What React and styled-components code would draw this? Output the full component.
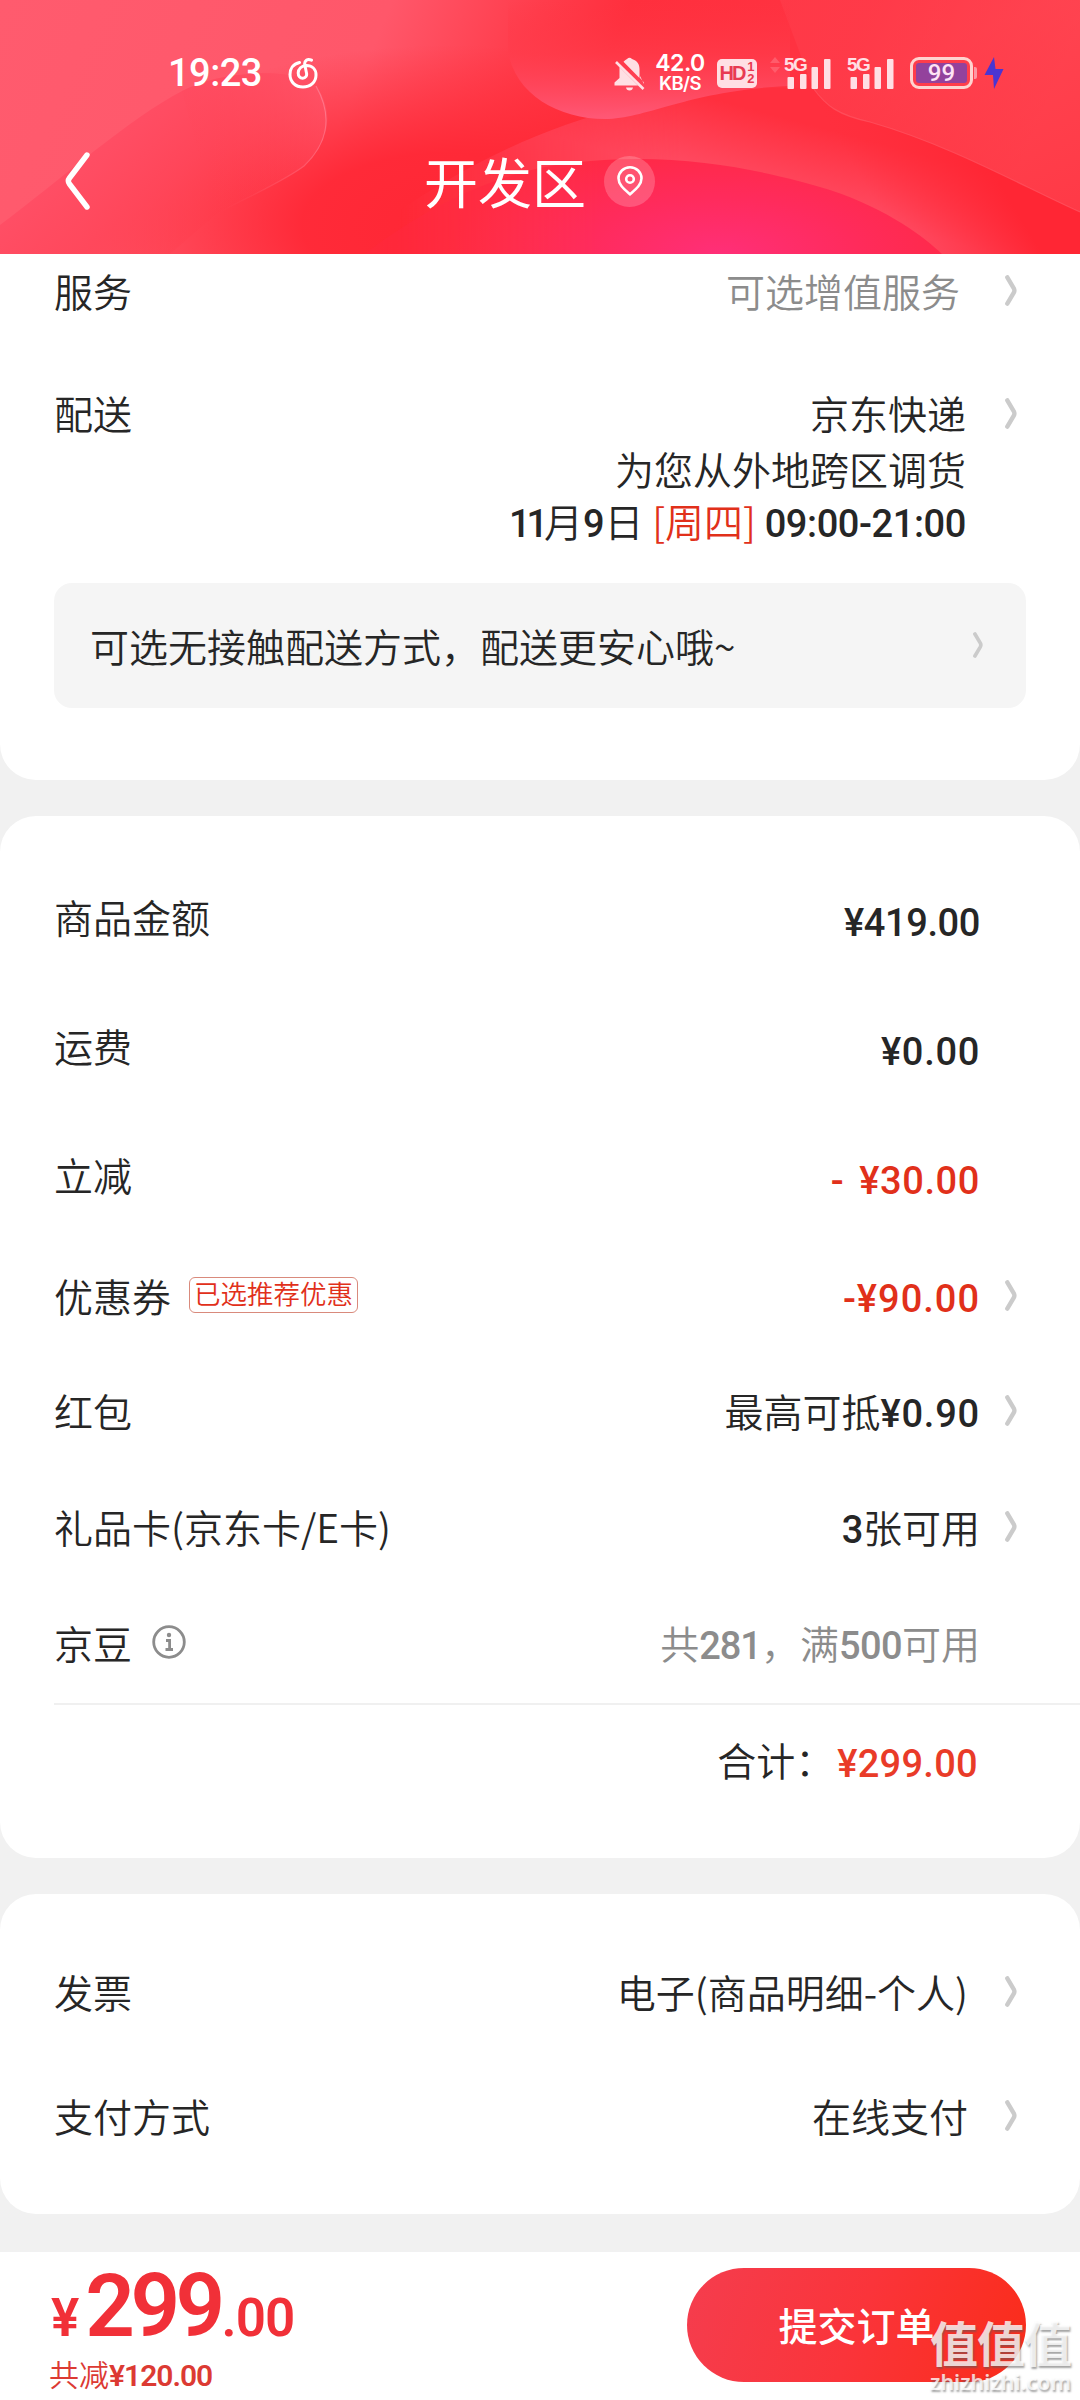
import React from 'react'
import styled, { createGlobalStyle } from 'styled-components'

const feeRows = [
  { id: 1, label: '商品金额', value: <Num $gap={-0.4}>¥419.00</Num>, height: 129, drop: 3 },
  { id: 2, label: '运费', value: <Num $gap={0.7}>¥0.00</Num>, height: 129, drop: 3 },
  { id: 3, label: '立减', value: <Num $gap={0.6}>- ¥30.00</Num>, height: 129, drop: 3, tone: 'red' },
  { id: 4, label: '优惠券', tag: '已选推荐优惠', value: <Num $gap={1}>-¥90.00</Num>, height: 114, tone: 'red', arrow: true },
  { id: 5, label: '红包', value: <>最高可抵<Num $gap={0.8}>¥0.90</Num></>, height: 116, arrow: true },
  { id: 6, label: '礼品卡(京东卡/E卡)', value: <><Num>3</Num>张可用</>, height: 116, arrow: true },
  { id: 7, label: '京豆', info: true, value: <>共<Num $gap={-1}>281</Num>，满<Num $gap={-0.6}>500</Num>可用</>, height: 116, tone: 'grey' },
]

const Arrow = ({ small }) => (
  <ArrowIcon $small={small} viewBox="0 0 12 31">
    <path d="M2.300 2.300 L8.800 13.300 Q10 15.500 8.800 17.700 L2.300 28.700" />
  </ArrowIcon>
)

const Signal = () => (
  <SignalBox>
    <span>5G</span>
    <svg width="44" height="31" viewBox="0 0 44 31" fill="#ffdfe4">
      <rect x="0.5" y="19" width="6.5" height="12" rx="1" />
      <rect x="13" y="16" width="6.5" height="15" rx="1" />
      <rect x="24.5" y="9" width="6.5" height="22" rx="1" />
      <rect x="37" y="1" width="6.5" height="30" rx="1" />
    </svg>
  </SignalBox>
)

const Waves = () => (
  <WavesSvg viewBox="0 0 1080 254" preserveAspectRatio="none">
    <defs>
      <linearGradient id="base" x1="0" y1="0" x2="1" y2="0.1">
        <stop offset="0" stopColor="#ff5b6e" />
        <stop offset="0.36" stopColor="#ff576a" />
        <stop offset="0.5" stopColor="#ff3c4b" />
        <stop offset="0.58" stopColor="#ff2f3d" />
        <stop offset="0.8" stopColor="#ff3342" />
        <stop offset="1" stopColor="#ff4450" />
      </linearGradient>
      <radialGradient id="deep" cx="0" cy="0" r="1" gradientUnits="userSpaceOnUse" gradientTransform="translate(450 225) scale(370 180)">
        <stop offset="0" stopColor="#ff2735" />
        <stop offset="0.4" stopColor="#ff2836" stopOpacity="0.95" />
        <stop offset="1" stopColor="#ff2b38" stopOpacity="0" />
      </radialGradient>
      <linearGradient id="leaf" x1="120" y1="110" x2="230" y2="235" gradientUnits="userSpaceOnUse">
        <stop offset="0" stopColor="#ff4f66" />
        <stop offset="0.5" stopColor="#ff4559" stopOpacity="0.85" />
        <stop offset="1" stopColor="#ff3645" stopOpacity="0" />
      </linearGradient>
      <linearGradient id="leafTip" x1="330" y1="90" x2="200" y2="190" gradientUnits="userSpaceOnUse">
        <stop offset="0" stopColor="#ff5a70" stopOpacity="0.6" />
        <stop offset="1" stopColor="#ff4052" stopOpacity="0" />
      </linearGradient>
      <linearGradient id="leafEdge" x1="326" y1="110" x2="220" y2="215" gradientUnits="userSpaceOnUse">
        <stop offset="0" stopColor="#ff7488" />
        <stop offset="1" stopColor="#ff5060" stopOpacity="0" />
      </linearGradient>
      <linearGradient id="cloud" x1="0" y1="0" x2="0" y2="1">
        <stop offset="0" stopColor="#ff3342" stopOpacity="0" />
        <stop offset="0.45" stopColor="#ff3c4c" stopOpacity="0.6" />
        <stop offset="1" stopColor="#ff5876" />
      </linearGradient>
      <linearGradient id="band" x1="680" y1="90" x2="660" y2="165" gradientUnits="userSpaceOnUse">
        <stop offset="0" stopColor="#ff2f3e" />
        <stop offset="1" stopColor="#ff4c64" />
      </linearGradient>
      <linearGradient id="bandFade" x1="400" y1="0" x2="680" y2="0" gradientUnits="userSpaceOnUse">
        <stop offset="0" stopColor="#fff" stopOpacity="0" />
        <stop offset="1" stopColor="#fff" />
      </linearGradient>
      <mask id="bandMask"><rect width="1080" height="254" fill="url(#bandFade)" /></mask>
      <linearGradient id="right" x1="960" y1="40" x2="1050" y2="254" gradientUnits="userSpaceOnUse">
        <stop offset="0" stopColor="#ff4452" />
        <stop offset="1" stopColor="#ff2634" />
      </linearGradient>
      <linearGradient id="slope" x1="880" y1="210" x2="980" y2="150" gradientUnits="userSpaceOnUse">
        <stop offset="0" stopColor="#ff2c3a" stopOpacity="0" />
        <stop offset="1" stopColor="#ff2634" />
      </linearGradient>
      <radialGradient id="hill" cx="0" cy="0" r="1" gradientUnits="userSpaceOnUse" gradientTransform="translate(720 254) scale(270 113)">
        <stop offset="0" stopColor="#ff2f78" />
        <stop offset="0.5" stopColor="#ff2b5c" />
        <stop offset="1" stopColor="#ff2942" />
      </radialGradient>
      <linearGradient id="hillFade" x1="370" y1="0" x2="600" y2="0" gradientUnits="userSpaceOnUse">
        <stop offset="0" stopColor="#fff" stopOpacity="0.3" />
        <stop offset="1" stopColor="#fff" />
      </linearGradient>
      <mask id="hillMask"><rect width="1080" height="254" fill="url(#hillFade)" /></mask>
    </defs>
    <rect width="1080" height="254" fill="url(#base)" />
    <rect width="1080" height="254" fill="url(#deep)" />
    <path d="M0 254 V225 C60 180 130 118 182 91 C220 70 300 66 318 88 C336 118 326 145 304 166 C280 184 240 200 215 215 L170 254 Z" fill="url(#leaf)" />
    <path d="M182 91 C220 70 300 66 318 88 C336 118 326 145 304 166 C280 184 240 200 215 215 Z" fill="url(#leafTip)" />
    <path d="M316 86 C334 118 326 145 304 166 C280 184 240 200 215 215" fill="none" stroke="url(#leafEdge)" strokeWidth="1.2" />
    <path d="M813 88 C826 106 838 115 870 122 C950 145 1020 185 1080 212 V0 H780 Z" fill="url(#right)" opacity="0.4" />
    <g mask="url(#bandMask)">
      <path d="M400 210 C520 130 640 85 813 88 C826 106 838 115 870 122 C950 145 1020 185 1080 212 V254 H400 Z" fill="url(#band)" />
    </g>
    <path d="M813 88 C826 106 838 115 870 122 C950 145 1020 185 1080 212 V254 H880 Z" fill="url(#slope)" />
    <path d="M508 0 V50 C514 95 560 119 605 119 C650 118 690 90 790 86 V0 Z" fill="url(#cloud)" />
    <path d="M813 88 C826 106 838 115 870 122 C950 145 1020 185 1080 212" fill="none" stroke="#ff5a68" strokeWidth="1.2" opacity="0.6" />
    <g mask="url(#hillMask)">
      <path d="M365 254 C415 215 490 172 570 163 C680 150 770 172 830 190 C890 210 925 238 942 254 Z" fill="url(#hill)" />
    </g>
  </WavesSvg>
)

const App = () => {
  return (
    <Page>
      <GlobalStyle />
      <Header>
        <Waves />
        <StatusBar>
          <Clock>19:23</Clock>
          <MusicIcon viewBox="0 0 30 32">
            <path d="M11.5 5.5 C5 7 2 12 2 17.500 C2 25 7.500 30 15 30 C22.500 30 28 25 28 18 C28 12 24 8.500 18.500 8.500 C13.500 8.500 10.200 12 10.200 16 C10.200 19 12 21.200 14.700 21.200 C17.500 21.200 19.200 19 18.500 16 L16.800 8 C16 3.500 19.500 1.200 23.500 3.200" />
          </MusicIcon>
          <StatusRight>
            <svg width="31" height="35" viewBox="0 0 31 35" fill="#ffdfe4">
              <path d="M13 3 Q15.500 0.500 18 3 C23 4.500 25.500 8 25.500 13 V22 L9.500 5.800 Q11 4 13 3Z" />
              <path d="M5.500 11 L24 29.500 H0.500 V26.500 L5.500 22Z" />
              <path d="M12 31.500 H19 Q18.500 34.500 15.500 34.500 Q12.500 34.500 12 31.500Z" />
              <path d="M26 20 V22 L30 26.500 V28Z" />
              <path d="M2 6 L29.500 33" stroke="#ffdfe4" strokeWidth="2.600" />
            </svg>
            <Speed>
              <b>42.0</b>
              <small>KB/S</small>
            </Speed>
            <HdBadge>
              <b>HD</b>
              <span>
                <i>1</i>
                <i>2</i>
              </span>
            </HdBadge>
            <Updown width="10" height="16" viewBox="0 0 10 16">
              <path d="M5 0 L10 6 H0Z M5 16 L0 10 H10Z" />
            </Updown>
            <Signal />
            <Signal />
            <Battery>
              <div>99</div>
            </Battery>
            <BoltIcon width="20" height="32" viewBox="0 0 20 32">
              <path d="M10 0 L0.500 18 H9 L10 32 L19.500 12 H11.500Z" />
            </BoltIcon>
          </StatusRight>
        </StatusBar>
        <NavBar>
          <BackIcon viewBox="0 0 26 58">
            <path d="M22 3 L4.500 26 Q2.200 29 4.500 32 L22 55" />
          </BackIcon>
          <Title>开发区</Title>
          <PinButton>
            <svg width="26" height="30" viewBox="0 0 26 30" fill="none" stroke="#fff" strokeWidth="2.600">
              <path d="M13 28.300 C7.500 23.500 1.500 19 1.500 12.300 A11.500 11 0 0 1 24.500 12.300 C24.500 19 18.500 23.500 13 28.300Z" />
              <circle cx="13" cy="13" r="3.800" />
            </svg>
          </PinButton>
        </NavBar>
      </Header>

      <DeliveryCard>
        <ServiceRow $gap={45}>
          <Label>服务</Label>
          <Value $tone="grey">可选增值服务</Value>
          <Arrow />
        </ServiceRow>
        <DeliveryRow>
          <Label>配送</Label>
          <DeliveryText>
            <p>京东快递</p>
            <p>为您从外地跨区调货</p>
            <p>
              <Num $gap={-4}>11</Num>月<Num>9</Num>日 <em>[周四]</em> <Num $gap={-0.4}>09:00-21:00</Num>
            </p>
          </DeliveryText>
          <Arrow />
        </DeliveryRow>
        <Notice>
          <span>可选无接触配送方式，配送更安心哦~</span>
          <Arrow small />
        </Notice>
      </DeliveryCard>

      <FeeCard>
        {
          feeRows.map((row) => (
            <Row key={row.id} $height={row.height} $gap={25}>
              <Label>{row.label}</Label>
              {row.tag && <Tag>{row.tag}</Tag>}
              {row.info && (
                <InfoIcon viewBox="0 0 34 34">
                  <circle cx="17" cy="17" r="15.300" />
                  <path d="M14 15.500 H17.600 V24.500 M13.500 24.500 H21" />
                  <circle className="dot" cx="17" cy="10" r="2.200" />
                </InfoIcon>
              )}
              <Value $tone={row.tone} $drop={row.drop}>{row.value}</Value>
              {row.arrow ? <Arrow /> : <ArrowGap />}
            </Row>
          ))
        }
        <TotalRow>
          <span>合计：</span>
          <Num $gap={0.3}>¥299.00</Num>
        </TotalRow>
      </FeeCard>

      <PayCard>
        <Row $height={124} $gap={37}>
          <Label>发票</Label>
          <Value>电子(商品明细-个人)</Value>
          <Arrow />
        </Row>
        <Row $height={124} $gap={37}>
          <Label>支付方式</Label>
          <Value>在线支付</Value>
          <Arrow />
        </Row>
      </PayCard>

      <Footer>
        <div>
          <Price>
            <small>¥</small>299<small>.00</small>
          </Price>
          <Saved>共减<b>¥120.00</b></Saved>
        </div>
        <SubmitButton>提交订单</SubmitButton>
        <Watermark>
          <b>值值值</b>
          <span>zhizhizhi.com</span>
        </Watermark>
      </Footer>
    </Page>
  )
}

export default App

const GlobalStyle = createGlobalStyle`
  * {
    box-sizing: border-box;
  }
  body {
    margin: 0;
    background: #f1f1f1;
  }
  p {
    margin: 0;
  }
`

const Page = styled.div`
  display: flex;
  flex-direction: column;
  width: 1080px;
  height: 2400px;
  overflow: hidden;
  background: #f1f1f1;
  color: #262626;
  font-family: 'Noto Sans CJK SC', sans-serif;
  font-size: 39px;
  font-weight: 350;
  line-height: 56px;
`

const Header = styled.header`
  position: relative;
  height: 254px;
  background: #ff3040;
  color: #fff;
`

const WavesSvg = styled.svg`
  position: absolute;
  inset: 0;
  width: 100%;
  height: 100%;
`

const StatusBar = styled.div`
  position: relative;
  display: flex;
  align-items: center;
  height: 146px;
  padding: 0 77px 0 168px;
`

const Clock = styled.span`
  width: 120px;
  font-family: Roboto, sans-serif;
  font-size: 38px;
  font-weight: 500;
  letter-spacing: -0.5px;
`

const MusicIcon = styled.svg`
  width: 30px;
  height: 32px;
  fill: none;
  stroke: #fff;
  stroke-width: 3;
  stroke-linecap: round;
`

const StatusRight = styled.div`
  display: flex;
  align-items: center;
  margin-left: auto;
`

const Speed = styled.div`
  display: flex;
  flex-direction: column;
  align-items: center;
  width: 52px;
  margin-left: 9px;
  font-family: Inter, sans-serif;
  font-weight: 600;
  b {
    font-size: 23px;
    font-weight: 600;
    line-height: 20px;
    letter-spacing: -0.5px;
  }
  small {
    font-size: 18.5px;
    line-height: 20px;
    letter-spacing: -0.6px;
  }
`

const HdBadge = styled.div`
  display: flex;
  align-items: center;
  justify-content: center;
  width: 40px;
  height: 29px;
  margin-left: 11px;
  border-radius: 5px;
  background: #ffdfe4;
  color: #e83a52;
  font-family: 'Liberation Sans', sans-serif;
  b {
    font-size: 20px;
    font-weight: 700;
    line-height: 29px;
    letter-spacing: -2px;
  }
  span {
    display: flex;
    flex-direction: column;
    margin-left: 3px;
  }
  i {
    font-size: 13px;
    font-style: normal;
    font-weight: 700;
    line-height: 12px;
  }
`

const Updown = styled.svg`
  margin: -16px 4px 0 13px;
  fill: #ff5c6b;
`

const SignalBox = styled.div`
  position: relative;
  width: 47px;
  height: 31px;
  padding-left: 3px;
  margin-right: 16px;
  svg {
    display: block;
  }
  span {
    position: absolute;
    left: 0;
    top: -2px;
    color: #ffdfe4;
    font-family: 'Liberation Sans', sans-serif;
    font-size: 19px;
    font-weight: 700;
    line-height: 18px;
    letter-spacing: -1.5px;
  }
`

const Battery = styled.div`
  position: relative;
  width: 63px;
  height: 32px;
  margin-right: 11px;
  padding: 3px;
  border: 3px solid #ffd3cf;
  border-radius: 9px;
  div {
    height: 20px;
    border-radius: 3px;
    background: #93429c;
    color: #ffe3f5;
    font-family: Roboto, sans-serif;
    font-size: 24px;
    font-weight: 500;
    line-height: 21px;
    text-align: center;
  }
  &::after {
    content: '';
    position: absolute;
    right: -7px;
    top: 7px;
    width: 3px;
    height: 12px;
    border-radius: 0 2px 2px 0;
    background: #ff97a2;
  }
`

const BoltIcon = styled.svg`
  margin-right: -1px;
  fill: #4a35d2;
`

const NavBar = styled.div`
  position: relative;
  display: flex;
  align-items: center;
  height: 70px;
  padding-left: 65px;
`

const BackIcon = styled.svg`
  width: 26px;
  height: 58px;
  fill: none;
  stroke: #fff;
  stroke-width: 5.4;
  stroke-linecap: round;
`

const Title = styled.h1`
  margin: 0 0 0 333px;
  font-size: 54px;
  font-weight: 400;
  line-height: 70px;
`

const PinButton = styled.div`
  display: flex;
  align-items: center;
  justify-content: center;
  width: 51px;
  height: 51px;
  margin-left: 18px;
  border-radius: 50%;
  background: rgb(255 255 255 / 20%);
`

const Card = styled.section`
  background: #fff;
  border-radius: 36px;
`

const DeliveryCard = styled(Card)`
  height: 526px;
  border-radius: 0 0 36px 36px;
`

const FeeCard = styled(Card)`
  height: 1042px;
  margin-top: 36px;
  padding-top: 35px;
`

const PayCard = styled(Card)`
  height: 320px;
  margin-top: 36px;
  padding-top: 35px;
`

const Row = styled.div`
  display: flex;
  align-items: center;
  height: ${(props) => props.$height}px;
  padding: 0 63px 0 54px;
  > :last-child {
    margin-left: ${(props) => props.$gap}px;
  }
`

const ServiceRow = styled(Row)`
  height: 72px;
`

const Label = styled.span`
  white-space: nowrap;
`

const tones = { red: '#e1301a', grey: '#8c8c8c' }

const Value = styled.span`
  margin-left: auto;
  padding-top: ${(props) => (props.$drop || 0) * 2}px;
  color: ${(props) => tones[props.$tone] || '#262626'};
  white-space: nowrap;
`

const NumText = styled.span`
  font-family: Roboto, sans-serif;
  font-size: 38px;
  font-weight: 500;
  line-height: 1;
  letter-spacing: ${(props) => props.$gap ?? -0.3}px;
  word-spacing: 5px;
`

function Num({ children, $gap }) {
  return <NumText $gap={$gap}>{children}</NumText>
}

const ArrowIcon = styled.svg`
  flex: none;
  width: ${(props) => (props.$small ? 10 : 12)}px;
  height: ${(props) => (props.$small ? 26 : 31)}px;
  fill: none;
  stroke: #cbcbcb;
  stroke-width: 4.4;
  stroke-linecap: round;
`

const ArrowGap = styled.i`
  width: 12px;
`

const DeliveryRow = styled.div`
  display: flex;
  align-items: flex-start;
  height: 257px;
  padding: 58px 63px 0 54px;
  ${ArrowIcon} {
    margin: 14px 0 0 39px;
  }
`

const DeliveryText = styled.div`
  margin-left: auto;
  text-align: right;
  p:nth-child(2) {
    line-height: 56px;
  }
  p:nth-child(3) {
    line-height: 48px;
  }
  em {
    color: #e1301a;
    font-style: normal;
  }
`

const Notice = styled.div`
  display: flex;
  align-items: center;
  justify-content: space-between;
  height: 125px;
  margin: 0 54px;
  padding: 0 43px 2px 36px;
  border-radius: 18px;
  background: #f5f5f5;
`

const Tag = styled.span`
  height: 36px;
  margin-left: 18px;
  padding: 0 4px;
  border: 1px solid #d98a7c;
  border-radius: 6px;
  color: #e1301a;
  font-size: 26.5px;
  line-height: 30px;
  white-space: nowrap;
`

const InfoIcon = styled.svg`
  width: 34px;
  height: 34px;
  margin-left: 20px;
  fill: none;
  stroke: #8c8c8c;
  stroke-width: 2.8;
  .dot {
    fill: #8c8c8c;
    stroke: none;
  }
`

const TotalRow = styled.div`
  display: flex;
  align-items: center;
  justify-content: flex-end;
  height: 113px;
  margin: 3px 0 0 54px;
  padding: 0 102px 3px 0;
  border-top: 2px solid #f0f0f0;
  span:first-child {
    margin-right: 3px;
  }
  ${NumText} {
    padding-top: 9px;
    color: #e93b28;
  }
`

const Footer = styled.footer`
  position: relative;
  display: flex;
  justify-content: space-between;
  height: 148px;
  margin-top: 38px;
  padding: 16px 54px 0 49px;
  background: #fff;
`

const Price = styled.div`
  height: 76px;
  color: #f13038;
  font-family: Roboto, sans-serif;
  font-size: 87px;
  font-weight: 600;
  line-height: 76px;
  letter-spacing: -4.6px;
  small {
    font-size: 53px;
    line-height: 1;
    letter-spacing: -1px;
  }
  small:first-child {
    margin: 0 7px 0 2px;
  }
  small:last-child {
    margin-left: 1px;
  }
`

const Saved = styled.div`
  margin-top: 11px;
  color: #dc3a33;
  font-size: 30px;
  line-height: 36px;
  b {
    font-family: Roboto, sans-serif;
    font-weight: 600;
    line-height: 1;
    letter-spacing: -1px;
  }
`

const SubmitButton = styled.button`
  width: 339px;
  height: 114px;
  padding: 0 0 3px;
  border: 0;
  border-radius: 57px;
  background: linear-gradient(110deg, #f53d4e 0%, #fa343a 50%, #fa2c19 100%);
  color: #fff;
  font-family: inherit;
  font-size: 39px;
  font-weight: 500;
`

const Watermark = styled.div`
  position: absolute;
  right: 8px;
  bottom: 5px;
  display: flex;
  flex-direction: column;
  width: 142px;
  color: rgb(255 255 255 / 78%);
  text-shadow: 1px 2px 2px rgb(90 90 90 / 55%);
  b {
    font-size: 48px;
    font-weight: 700;
    line-height: 56px;
    letter-spacing: -1px;
    white-space: nowrap;
  }
  span {
    font-family: 'Noto Sans', sans-serif;
    font-size: 21.5px;
    font-weight: 600;
    line-height: 26px;
  }
`
